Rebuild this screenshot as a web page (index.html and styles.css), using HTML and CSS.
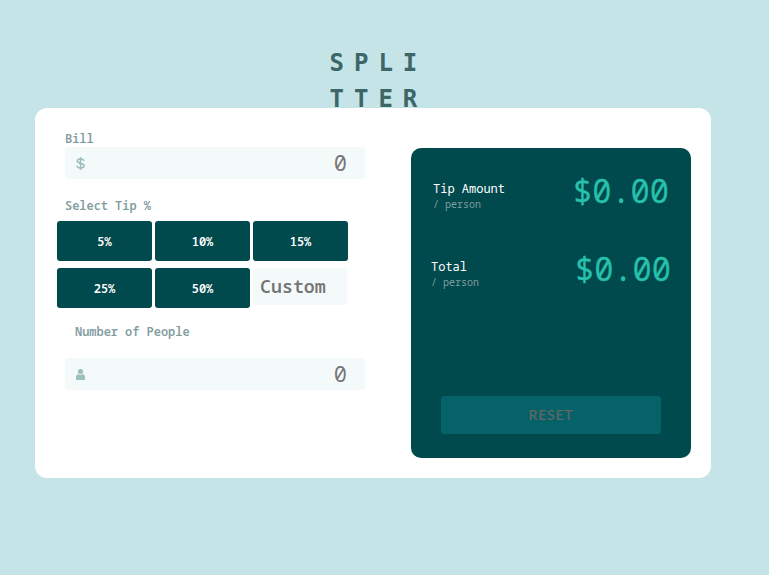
FILE: index.html
```html
<!DOCTYPE html>
<html lang="en">
<head>
<meta charset="utf-8">
<title>Splitter</title>
<link rel="stylesheet" href="styles.css">
</head>
<body>
<h1 class="logo">SPLI<br>TTER</h1>
<main class="card">
  <section class="form">
    <label class="label">Bill</label>
    <div class="field"><svg class="icon" width="9" height="13" viewBox="0 0 9 13"><path fill="none" stroke="#9bbfbd" stroke-width="1.6" d="M7.900 4C7.700 2.700 6.400 2 4.600 2 2.500 2 1.200 2.700 1.200 4.100c0 3.100 6.900 1.500 6.900 4.700 0 1.500-1.400 2.200-3.500 2.200C2.400 11 1 10.200.9 8.700M4.500 0v13"/></svg><span class="value">0</span></div>
    <span class="label tip-label">Select Tip %</span>
    <div class="tips">
      <button class="tip">5%</button><button class="tip">10%</button><button class="tip">15%</button>
      <button class="tip">25%</button><button class="tip">50%</button><div class="custom">Custom</div>
    </div>
    <span class="label people-label">Number of People</span>
    <div class="field"><svg class="icon" width="9" height="11" viewBox="0 0 9 11"><circle cx="4.500" cy="2.600" r="2.600" fill="#9bbfbd"/><path fill="#9bbfbd" d="M2.200 5.200c1.300 1 3.300 1 4.600 0C8.400 5.600 9 6.700 9 8.300v1.500c0 .8-.4 1.200-1.200 1.200H1.200C.4 11 0 10.600 0 9.800V8.300c0-1.600.6-2.700 2.200-3.100z"/></svg><span class="value">0</span></div>
  </section>
  <section class="results">
    <div class="row"><div><p class="name">Tip Amount</p><p class="per">/ person</p></div><output class="amount">$0.00</output></div>
    <div class="row total"><div><p class="name">Total</p><p class="per">/ person</p></div><output class="amount">$0.00</output></div>
    <button class="reset" disabled>RESET</button>
  </section>
</main>
</body>
</html>
```
FILE: styles.css
```css
* { box-sizing: border-box; }
body { margin: 0; background: #c5e4e7; font-family: "Noto Sans Mono", "DejaVu Sans Mono", monospace; height: 575px; overflow: hidden; }
.logo { margin: 0; padding: 45px 0 0 329.500px; height: 108px; font: bold 24px/36px "DejaVu Sans Mono", monospace; letter-spacing: 10px; color: #3d6666; }
.card { width: 676px; height: 370px; margin-left: 35px; background: #fff; border-radius: 12px; display: flex; justify-content: space-between; padding: 23px 20px 20px 30px; }
.form { width: 300px; display: flex; flex-direction: column; }
.label { font-size: 12px; letter-spacing: -0.040px; line-height: 16px; font-weight: 600; color: #7f9c9f; }
.field { height: 32px; background: #f4fafa; border-radius: 3px; display: flex; align-items: center; justify-content: space-between; padding: 0 18px 0 11px; }
.icon { display: block; }
.value { font-size: 22px; line-height: 30px; margin-top: -2px; color: #757575; }
.tip-label { margin-top: 19px; }
.tips { display: grid; grid-template-columns: repeat(3, 95px); gap: 7px 3px; margin: 7px 0 0 -8px; }
.tip { height: 40px; border: 0; padding: 0; border-radius: 3px; background: #00494d; color: #fff; font: 600 12px "Noto Sans Mono", "DejaVu Sans Mono", monospace; }
.custom { height: 37px; width: 94px; padding-left: 7px; background: #f4fafa; border-radius: 3px; color: #757575; font-weight: 600; font-size: 18.300px; line-height: 36px; }
.people-label { margin: 16px 0 18px 10px; }
.results { width: 280px; height: 310px; margin-top: 17px; background: #00494d; border-radius: 10px; padding: 24px 22px; display: flex; flex-direction: column; }
.row { display: flex; justify-content: space-between; height: 78px; }
.row p { margin: 0; }
.row div { padding-top: 9px; }
.name { font-size: 12px; line-height: 16px; color: #fff; }
.per { font-size: 10px; line-height: 15px; color: #7f9c9f; }
.amount { font-size: 32px; line-height: 37px; color: #26c0ab; -webkit-text-stroke: 0.3px #26c0ab; }
.total { margin: 0 -2px; }
.reset { margin: auto 8px 0; height: 38px; border: 0; padding: 0 0 2px; border-radius: 3px; background: #056268; color: #666; font: 500 14px Lato, sans-serif; letter-spacing: 0.800px; }
```
